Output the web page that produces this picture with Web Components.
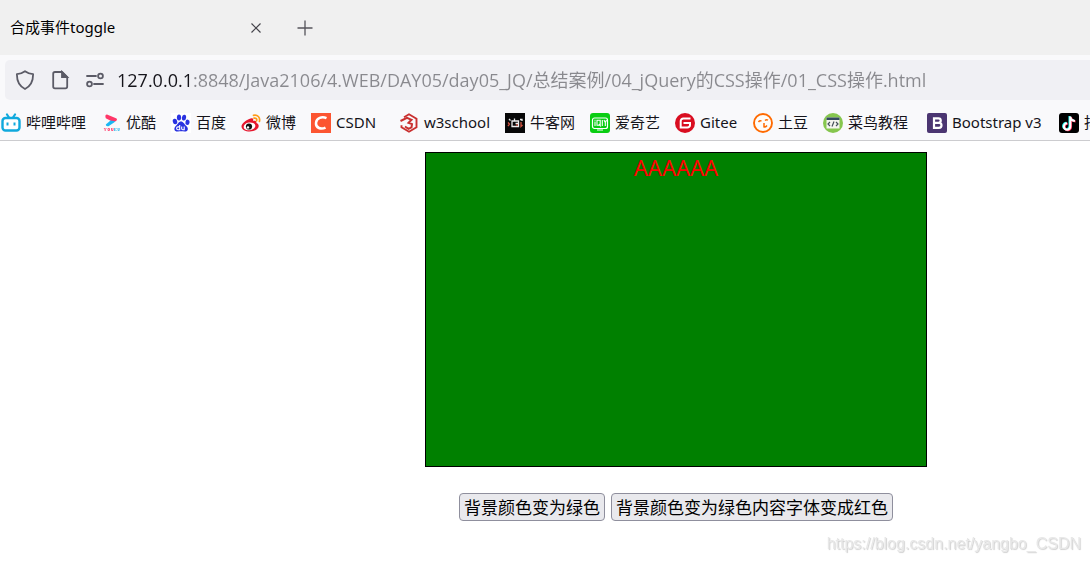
<!DOCTYPE html>
<html lang="zh-CN">
<head>
<meta charset="utf-8">
<title>合成事件toggle</title>
<style>
  html, body { height: 100%; }
  body {
    margin: 0;
    background: #fff;
    color: #15141a;
    font-family: "Noto Sans", "Noto Sans CJK SC", sans-serif;
    overflow: hidden;
  }
</style>
</head>
<body>
<browser-window>
  <tab-strip slot="chrome"><browser-tab>合成事件toggle</browser-tab></tab-strip>
  <address-bar slot="chrome" value="127.0.0.1:8848/Java2106/4.WEB/DAY05/day05_JQ/总结案例/04_jQuery的CSS操作/01_CSS操作.html"></address-bar>
  <bookmarks-bar slot="chrome">
    <book-mark icon="bilibili">哔哩哔哩</book-mark>
    <book-mark icon="youku">优酷</book-mark>
    <book-mark icon="baidu">百度</book-mark>
    <book-mark icon="weibo">微博</book-mark>
    <book-mark icon="csdn">CSDN</book-mark>
    <book-mark icon="w3school">w3school</book-mark>
    <book-mark icon="nowcoder">牛客网</book-mark>
    <book-mark icon="iqiyi">爱奇艺</book-mark>
    <book-mark icon="gitee">Gitee</book-mark>
    <book-mark icon="tudou">土豆</book-mark>
    <book-mark icon="runoob">菜鸟教程</book-mark>
    <book-mark icon="bootstrap">Bootstrap v3</book-mark>
    <book-mark icon="douyin">抖音</book-mark>
  </bookmarks-bar>
  <css-demo>AAAAAA</css-demo>
  <water-mark>https://blog.csdn.net/yangbo_CSDN</water-mark>
</browser-window>

<script>
const define = (name, html, setup) => customElements.define(name, class extends HTMLElement {
  constructor() {
    super();
    this.attachShadow({ mode: 'open' });
  }
  connectedCallback() {
    this.shadowRoot.innerHTML = html;
    if (setup) setup(this, this.shadowRoot);
  }
});

define('browser-window', `
  <style>
    :host { display: flex; flex-direction: column; min-height: 100%; position: relative; }
    header { background: #f9f9fb; border-bottom: 1px solid #cccccf; }
  </style>
  <header><slot name="chrome"></slot></header>
  <main><slot></slot></main>`);

define('tab-strip', `
  <style>
    :host { display: flex; align-items: center; height: 55px; background: #f0f0f0; }
    button { border: 0; padding: 0; margin-left: 23px; width: 32px; height: 32px; background: none; display: grid; place-items: center; }
  </style>
  <slot></slot>
  <button aria-label="新建标签页"><svg width="16" height="16" fill="none" stroke="#55545b" stroke-width="1.3"><path d="M8 .5v15M.5 8h15"/></svg></button>`);

define('browser-tab', `
  <style>
    :host { display: flex; align-items: center; justify-content: space-between; width: 256px; padding-left: 10px; font-size: 15px; line-height: 20px; color: #000; }
    span { padding-bottom: 2px; }
    button { border: 0; padding: 0; width: 20px; height: 20px; background: none; display: grid; place-items: center; }
  </style>
  <span><slot></slot></span>
  <button aria-label="关闭标签页"><svg width="10" height="10" fill="none" stroke="#45444b" stroke-width="1.2"><path d="M.5 .5l9 9M9.500 .5l-9 9"/></svg></button>`);

define('address-bar', `
  <style>
    :host { display: block; padding: 5px 0 0 5px; }
    form { display: flex; align-items: center; height: 40px; padding-left: 10px; gap: 15px; background: #f0f0f4; border-radius: 5px 0 0 5px; }
    svg { flex: none; fill: none; stroke: #5b5b66; stroke-width: 1.8; }
    input {
      flex: 1; min-width: 0; height: 32px; margin: 0; padding: 0 0 2px; border: 0; outline: 0;
      font: 18px/24px "Open Sans", "Noto Sans CJK SC", sans-serif;
      color: transparent;
      background: linear-gradient(to right, #15141a 76px, #89898e 76px);
      -webkit-background-clip: text; background-clip: text;
    }
    .url { display: flex; flex: 1; margin-left: -3px; }
  </style>
  <form>
    <svg width="20" height="20"><path d="M10 1.200C7.500 3 4.800 3.900 1.900 4.100C1.800 10.700 4 16 10 19C16 16 18.200 10.700 18.100 4.100C15.200 3.900 12.500 3 10 1.200Z" stroke-linejoin="round"/></svg>
    <svg width="20" height="20"><path d="M5 2h7l5.200 5.200V16.500a1.800 1.800 0 0 1-1.800 1.800H5a1.800 1.800 0 0 1-1.800-1.800V3.800A1.800 1.800 0 0 1 5 2Z"/><path d="M12 2v5.200h5.200Z" fill="#5b5b66"/></svg>
    <svg width="20" height="20"><path d="M2 6h9M9 14h9" stroke-linecap="round"/><circle cx="15.500" cy="6" r="2.400"/><circle cx="4.500" cy="14" r="2.400"/></svg>
    <div class="url"><input type="text" aria-label="地址栏" spellcheck="false"></div>
  </form>`, (el, root) => { root.querySelector('input').value = el.getAttribute('value'); });

define('bookmarks-bar', `
  <style>
    :host { display: block; overflow: hidden; }
    nav { display: grid; grid-template-columns: 100px 70px 70px 70px 88px 106px 85px 85px 78px 70px 104px 132px auto; align-items: center; height: 40px; box-sizing: border-box; padding: 5px 0 0 1px; }
  </style>
  <nav aria-label="书签"><slot></slot></nav>`);

const icons = {
  bilibili: `<path d="M6 1.500l2 3M14 1.500l-2 3" stroke="#10a9dd" stroke-width="2.200" stroke-linecap="round"/><rect x="1.500" y="5" width="17" height="12.500" rx="3" fill="#fff" stroke="#10a9dd" stroke-width="2.400"/><path d="M6.500 9.500v3M13.500 9.500v3" stroke="#10a9dd" stroke-width="2"/>`,
  youku: `<path d="M6 1.500L15 5.300q2 1.200 0 2.700l-2.500 1.300L4.800 5.200Q3.500 1.800 6 1.500Z" fill="#ff3768"/><path d="M12.500 8l2 .6-7 4.600q-2.800.6-2.700-1.700L9.500 7.500Z" fill="#1bb7f4"/><path d="M3 15l1.200 1.500L5.400 15M4.200 16.500V18M7 15.500h1.500v2H7ZM10.500 15v2.500H12V15" fill="none" stroke="#ff5a82"/><path d="M13.500 15v3M15.500 15l-1.500 1.500 1.500 1.500M17 15v2.500h1.200V15" fill="none" stroke="#53c6f0"/>`,
  baidu: `<rect width="20" height="20" fill="#fff"/><g fill="#2932e1"><ellipse cx="4" cy="8.500" rx="2.200" ry="2.800" transform="rotate(-15 4 8.500)"/><ellipse cx="8" cy="4.500" rx="2.100" ry="2.900"/><ellipse cx="13" cy="4.700" rx="2.100" ry="2.900" transform="rotate(10 13 4.700)"/><ellipse cx="16.500" cy="9.300" rx="2.100" ry="2.700" transform="rotate(12 16.500 9.300)"/><path d="M10 8.500c2.500 0 3 2.500 5 4.200 3.500 3 1.500 6.300-1.500 5.800-2.300-.4-4-.4-6.500 0C3.500 19 2 15.500 5 12.700 7.200 10.800 7.500 8.500 10 8.500Z"/></g><path d="M8.700 12v4.700H7a1.300 1.300 0 0 1 0-2.800h1.700M10.700 13.500v2.300q0 .9 1 .9h1.500v-3.200" fill="none" stroke="#fff" stroke-width="1.100"/>`,
  weibo: `<path d="M15.500 10c0-2-1-2.800-3.400-1.900.8-2.500-.8-3.800-3.900-2C4 8 .5 11 .5 13.500c0 3 4 5 8.200 5 5 0 9-2.700 9-5.500 0-1.500-.8-2.500-2.200-3Z" fill="#e6162d"/><ellipse cx="8.500" cy="13.400" rx="5.900" ry="3.900" fill="#fff" transform="rotate(-8 8.500 13.400)"/><circle cx="8" cy="13.500" r="3.100" fill="#111"/><circle cx="7" cy="14.400" r="1.200" fill="#fff"/><path d="M12.500 2.300c4-.9 7 2 5.900 6.200M13 5.200c2-.4 3.200.8 2.600 2.600" fill="none" stroke="#ff9b18" stroke-width="1.700" stroke-linecap="round"/>`,
  csdn: `<rect width="20" height="20" fill="#fc5531"/><path d="M15.500 5.200C11 3.200 5.500 4.800 5 10c-.4 5 5 6.800 9.500 4.600" fill="none" stroke="#fff" stroke-width="2.500"/>`,
  w3school: `<path d="M5 4.300L10 1.300l7.500 4.400v8.600L10 18.700l-7.500-4.400v-2" fill="none" stroke="#c9302f" stroke-width="1.900"/><path d="M1.500 8L8 4.800l4.500 2-3 3 3.500 1.300-.5 3.200-3 1.500L6 13.500" fill="none" stroke="#c9302f" stroke-width="2"/>`,
  nowcoder: `<rect width="20" height="20" fill="#080808"/><path d="M7 8h6.500v5.500H7ZM9.500 5.500V8M10.500 10.500h3M4 6l1.500 1.500M15 6.500h2v1.500" fill="none" stroke="#eee" stroke-width="1.300"/><path d="M3 9.500l1.500 1.500L3 13M16 9v4.500l1.500-1.500M12 11v2" fill="none" stroke="#d65542" stroke-width="1.300"/>`,
  iqiyi: `<rect width="20" height="20" rx="3" fill="#09cd12"/><rect x="2.500" y="5" width="15" height="10.500" rx="2" fill="none" stroke="#fff" stroke-width="1.200"/><path d="M5 8.500V13M5 6.700v1M7 7.200h3.200v5H7ZM9 11l1.800 2.500M12.300 7v6M14 7l1.300 2.500L16.500 7M15.300 9.500V13" fill="none" stroke="#fff" stroke-width="1.100"/><path d="M7 17h6" stroke="#fff"/>`,
  gitee: `<circle cx="10" cy="10" r="10" fill="#d90d20"/><path d="M15.500 5.500H8.300a2.600 2.600 0 0 0-2.600 2.600v6.400h6.700a2.600 2.600 0 0 0 2.600-2.600V10H8.500" fill="none" stroke="#fff" stroke-width="2"/>`,
  tudou: `<circle cx="10" cy="10" r="9" fill="#fffdf9" stroke="#ff6a00" stroke-width="1.900"/><path d="M5.500 9q1.300-1.800 3-.8M12 7.500q1.500-1.500 3-.3M11 10v4M10.500 14q2 .5 3.500-1.500" fill="none" stroke="#ff6a00" stroke-width="1.500"/>`,
  runoob: `<circle cx="10" cy="10" r="10" fill="#86c64e"/><rect x="3.500" y="4.500" width="13" height="11" fill="#f5f5f0"/><path d="M3.500 4.500h13v2.500h-13Z" fill="#34495e"/><path d="M7 9l-2 2 2 2M13 9l2 2-2 2M11 8.500l-2 5" fill="none" stroke="#46515a" stroke-width="1.200"/>`,
  bootstrap: `<rect width="20" height="20" rx="2" fill="#4b3571"/><path d="M7 5.300h4.500a2.200 2.200 0 0 1 0 4.500H7Zm0 4.500h5a2.500 2.500 0 0 1 0 5H7Z" fill="none" stroke="#fff" stroke-width="2.200"/>`,
  douyin: `<rect width="20" height="20" rx="3" fill="#000"/><g fill="none" stroke-width="2.100"><path d="M10.500 3v10a3.200 3.200 0 1 1-3.200-3.200M10.500 3.500q.5 3.500 4.600 4" stroke="#25f4ee"/><path d="M12 4v10a3.200 3.200 0 1 1-3.200-3.200M12 4.500q.5 3.500 4.600 4" stroke="#fe2c55"/><path d="M11.300 3.500v10a3.200 3.200 0 1 1-3.200-3.200M11.300 4q.5 3.500 4.600 4" stroke="#fff"/></g>`
};

define('book-mark', `
  <style>
    :host { display: block; }
    a { display: flex; align-items: center; gap: 5px; color: inherit; text-decoration: none; font-size: 15px; line-height: 20px; white-space: nowrap; }
    svg { flex: none; }
    span { padding-bottom: 2px; }
  </style>
  <a href="#"><svg width="20" height="20" viewBox="0 0 20 20" aria-hidden="true"></svg><span><slot></slot></span></a>`,
  (el, root) => { root.querySelector('svg').innerHTML = icons[el.getAttribute('icon')]; });

define('css-demo', `
  <style>
    :host { display: flex; flex-direction: column; align-items: center; padding: 11px 0 0 262px; }
    .panel { box-sizing: border-box; width: 502px; height: 315px; border: 1px solid #000; background: green; color: red; text-align: center; font-size: 22px; line-height: 28px; }
    .actions { display: flex; gap: 6px; margin-top: 26px; }
    button { height: 28px; padding: 0 4px; border: 1px solid #8f8f9d; border-radius: 4px; background: #e9e9ed; color: #000; font: 17px/24px "Noto Sans CJK SC", sans-serif; white-space: nowrap; }
  </style>
  <div class="panel"><slot></slot></div>
  <div class="actions"><button>背景颜色变为绿色</button><button>背景颜色变为绿色内容字体变成红色</button></div>`);

define('water-mark', `
  <style>
    :host { position: fixed; right: 9px; bottom: 8px; font: 16px/20px "Liberation Sans", sans-serif; color: #e8e8e8; text-shadow: 1px 1px 1px #d0d0d0; }
  </style>
  <slot></slot>`);
</script>
</body>
</html>
